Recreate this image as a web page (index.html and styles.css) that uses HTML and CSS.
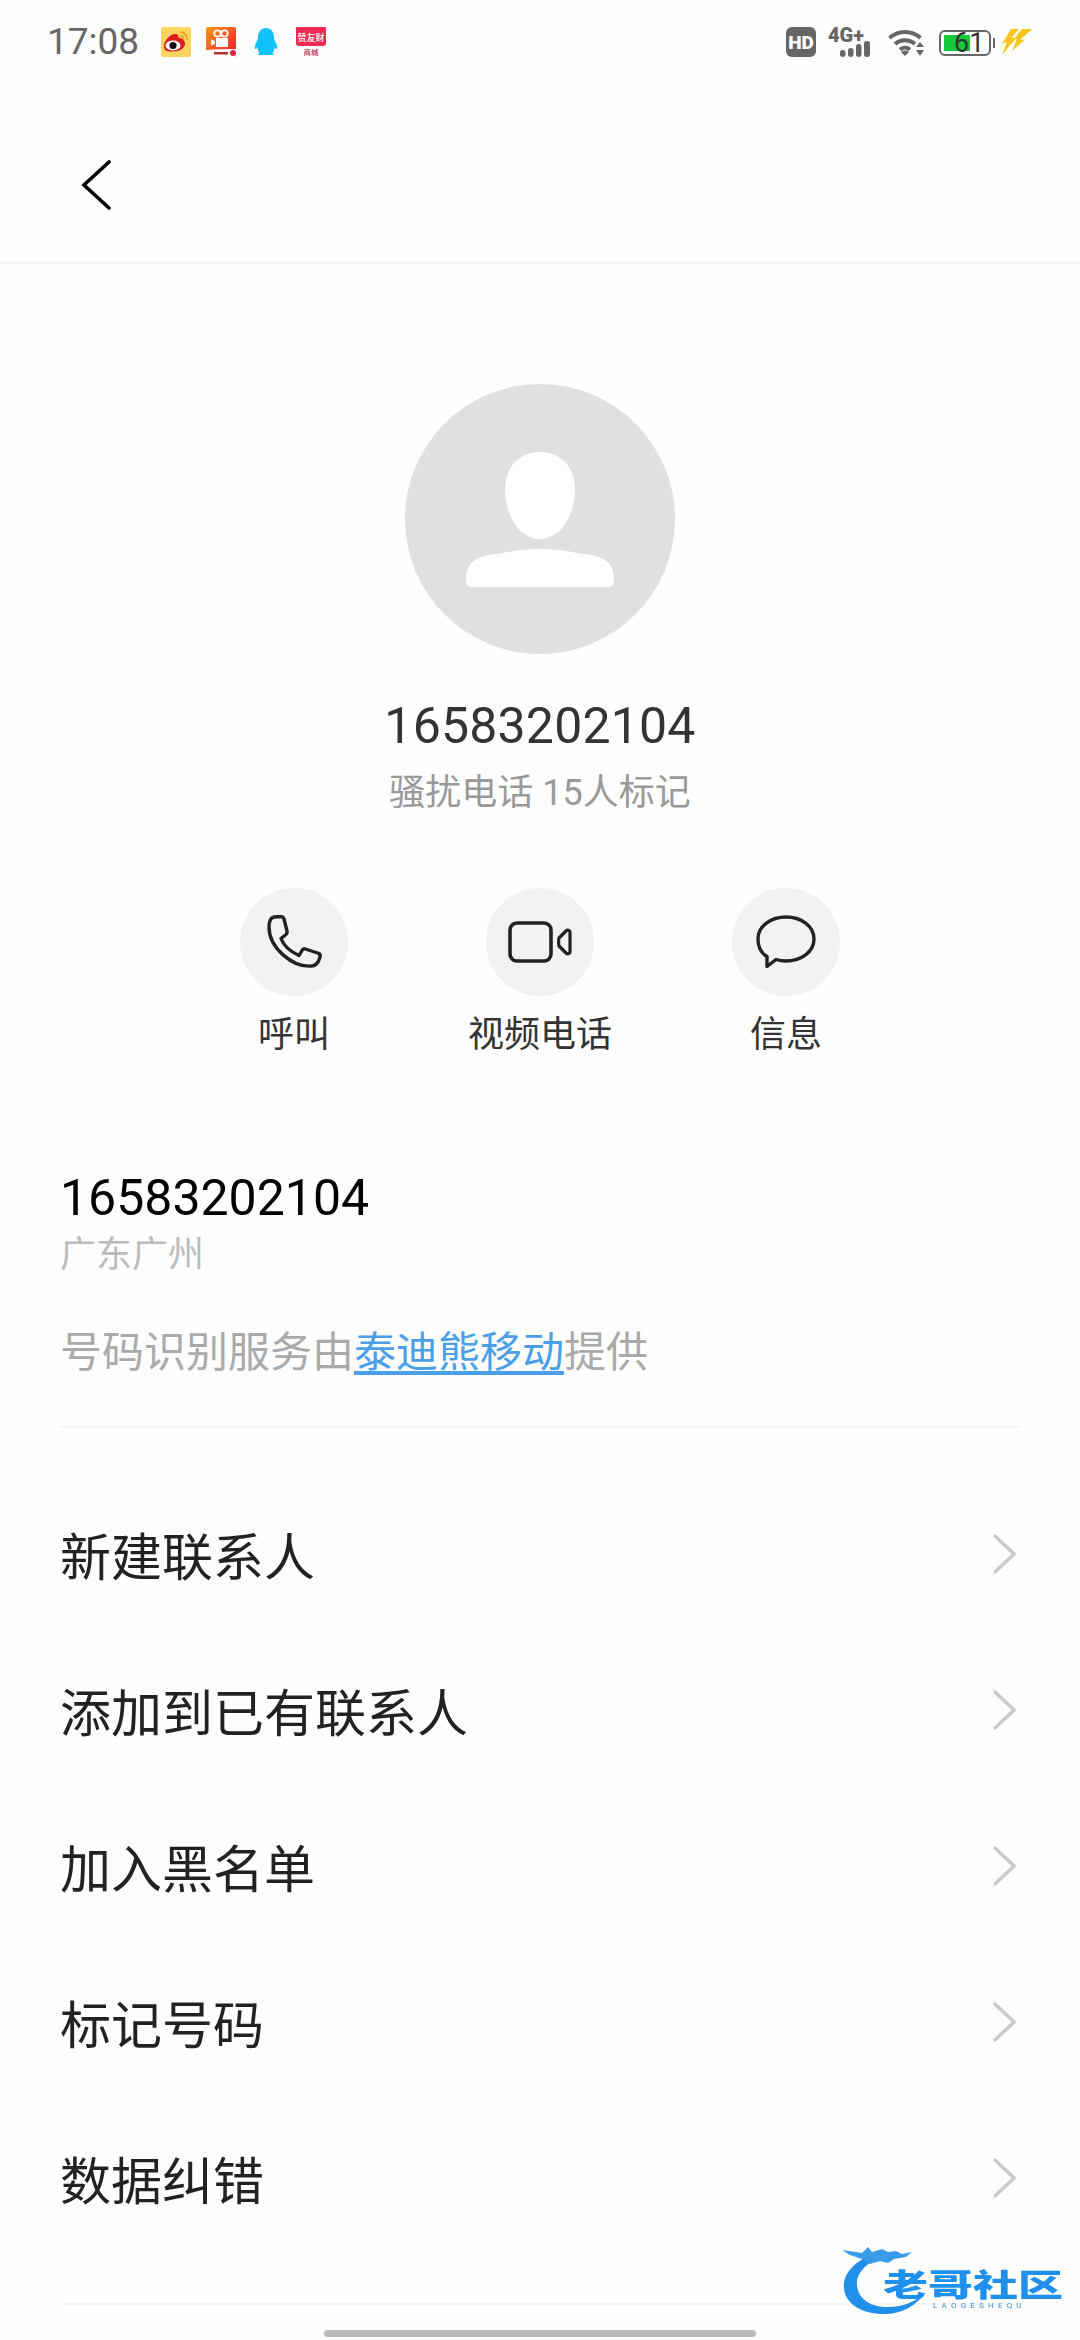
FILE: index.html
```html
<!DOCTYPE html>
<html lang="zh-CN">
<head>
    <meta charset="UTF-8">
    <meta name="viewport" content="width=device-width, initial-scale=1.0">
    <title>16583202104</title>
    <link rel="stylesheet" href="styles.css">
</head>
<body>
    <div class="phone">
        <div class="status">
            <div class="status-left">
                <span class="time">17:08</span>
                <svg class="app-icon" viewBox="0 0 30 30">
                    <rect width="30" height="30" rx="2" fill="#fdd45f"/>
                    <path d="M3 19c0-5 6-12 11-12 3 0 4 2 3.500 4 4 0 6.500 2 6.500 5.500 0 4.500-5 8-12 8S3 23.500 3 19z" fill="#e01d1d"/>
                    <ellipse cx="12" cy="18.500" rx="7.500" ry="5" fill="#fff"/>
                    <circle cx="12" cy="18.500" r="3.600" fill="#111"/>
                    <path d="M19 5c4.500 0 7 3 7 8M19 8.500c2.500 0 3.500 1.500 3.500 4" fill="none" stroke="#e3a11c" stroke-width="1.600"/>
                </svg>
                <svg class="app-icon" viewBox="0 0 30 30">
                    <defs>
                        <linearGradient id="kwai" x1="0" y1="0" x2="1" y2="1">
                            <stop offset="0" stop-color="#fb9a0d"/>
                            <stop offset="1" stop-color="#ee1238"/>
                        </linearGradient>
                    </defs>
                    <rect width="30" height="30" rx="2" fill="url(#kwai)"/>
                    <circle cx="11.500" cy="6.500" r="3.200" fill="none" stroke="#fff" stroke-width="1.800"/>
                    <circle cx="18.500" cy="6.500" r="3.200" fill="none" stroke="#fff" stroke-width="1.800"/>
                    <path d="M10 11h12v9H10zM9 14l-4-1.500v6L9 17z" fill="#fff"/>
                    <path d="M0 23c10-1 20-1 30-1v6a2 2 0 0 1-2 2H0z" fill="#fff"/>
                    <path d="M8 25h14v2.500H8z" fill="#b5352f"/>
                    <circle cx="27" cy="26" r="3" fill="#e8203f"/>
                </svg>
                <svg class="app-icon" viewBox="0 0 30 30">
                    <path d="M15 1c5 0 8 4 8 9 0 2 .5 3 2 6 1.500 3 1.500 6 .5 6-1 0-1.500-1-2-2 0 3-1 5-2 6 1 .5 1.500 1 1.500 1.500 0 .5-3 .500-5 .500h-6c-2 0-5 0-5-.500 0-.5.5-1 1.500-1.500-1-1-2-3-2-6-.5 1-1 2-2 2-1 0-1-3 .5-6 1.500-3 2-4 2-6 0-5 3-9 8-9z" fill="#12c2fb"/>
                </svg>
                <svg class="app-icon" viewBox="0 0 30 30">
                    <path d="M0 1a1 1 0 0 1 1-1h28a1 1 0 0 1 1 1v15c0 2-1 3-3 3H3c-2 0-3-1-3-3z" fill="#ee2b50"/>
                    <text class="app-text" x="15" y="13.500" text-anchor="middle" textLength="27" lengthAdjust="spacingAndGlyphs" font-size="9" fill="#fff">赞友财</text>
                    <text class="app-text" x="15" y="28" text-anchor="middle" textLength="15" lengthAdjust="spacingAndGlyphs" font-size="7" fill="#b5264a">商城</text>
                </svg>
            </div>
            <div class="status-right">
                <svg class="hd" viewBox="0 0 30 30">
                    <rect width="30" height="30" rx="6" fill="#666"/>
                    <text class="status-text" x="15" y="21.500" text-anchor="middle" font-size="19" fill="#fff">HD</text>
                </svg>
                <svg class="signal" viewBox="0 0 47 30">
                    <text class="status-text" x="0" y="15" font-size="20" fill="#666">4G+</text>
                    <g fill="#666">
                        <rect x="12" y="23" width="5.500" height="7" rx="2.700"/>
                        <rect x="20" y="21" width="5.500" height="9" rx="2.700"/>
                        <rect x="28" y="17" width="5.500" height="13" rx="2.700"/>
                        <rect x="36" y="14" width="6" height="16" rx="2.700"/>
                    </g>
                </svg>
                <svg class="wifi" viewBox="0 0 37 30">
                    <path d="M1.500 11c9-8 22-8 31 0M7 17c6-5 14-5 20 0M12 22.500c3-2.500 7-2.500 10 0" fill="none" stroke="#666" stroke-width="3.800"/>
                    <path d="M17 29l-4-4c2-2 6-2 8 0z" fill="#666"/>
                    <path d="M32 15l4 5h-8zM32 29l-4-6h8z" fill="#666"/>
                </svg>
                <div class="battery">
                    <div class="battery-body">
                        <div class="battery-fill" style="width: 61%"></div>
                        <span class="battery-num">61</span>
                    </div>
                    <div class="battery-tip"></div>
                </div>
                <svg class="bolt" viewBox="0 0 30 26">
                    <path d="M9 0h8L9 9l6-1L0 26 5 13l-5 2zM20 0h10L18 11l5-.5L10 22l5-12-4 1z" fill="#f8c51c"/>
                </svg>
            </div>
        </div>

        <div class="navbar">
            <svg class="back" viewBox="0 0 30 50">
                <path d="M28 2L3 25l25 23" fill="none" stroke="#000" stroke-width="3.600" stroke-linecap="round"/>
            </svg>
        </div>

        <div class="profile">
            <div class="avatar">
                <svg viewBox="0 0 270 270" width="270" height="270">
                    <path d="M135 68c-20 0-35 14-35 38 0 24 14 49 35 49s35-25 35-49c0-24-15-38-35-38z" fill="#fff"/>
                    <path d="M135 165c-20 0-30 3-45 5-22 3-29 10-29 26 0 5 2 7 5 7h138c3 0 5-2 5-7 0-16-7-23-29-26-15-2-25-5-45-5z" fill="#fff"/>
                </svg>
            </div>
            <div class="name">16583202104</div>
            <div class="tag">骚扰电话 15人标记</div>
        </div>

        <div class="actions">
            <div class="action">
                <div class="action-circle">
                    <svg viewBox="0 0 55 54" width="55" height="54">
                        <path d="M7 2l7-.5c1.500 0 2.500 1 3 2.500l3 12c.3 1.500 0 2.500-1 3.500l-5 4c3 8 9 13 18 17l3-5c1-1.500 2-2 3.500-1.500l12 4c2 .5 3 2 2.500 4-1 4-3 8.500-8 9C26 53 2 33 2 12 2 7 3 3 7 2z" fill="none" stroke="#222" stroke-width="3.400" stroke-linejoin="round"/>
                    </svg>
                </div>
                <span class="action-label">呼叫</span>
            </div>
            <div class="action">
                <div class="action-circle">
                    <svg viewBox="0 0 64 42" width="64" height="42">
                        <rect x="2" y="2" width="41" height="38" rx="7" fill="none" stroke="#222" stroke-width="3.600"/>
                        <path d="M51 17l7-7c1.500-1.500 4-1 4 1v20c0 2-2.500 2.500-4 1l-7-7c-.5-.5-.5-7.500 0-8z" fill="none" stroke="#222" stroke-width="3.200" stroke-linejoin="round"/>
                    </svg>
                </div>
                <span class="action-label">视频电话</span>
            </div>
            <div class="action">
                <div class="action-circle">
                    <svg viewBox="0 0 60 54" width="60" height="54">
                        <path d="M30 2c15 0 28 9 28 22S45 46 30 46c-4 0-7-.5-10-1.500l-9 7v-10C5 38 2 31 2 24 2 11 15 2 30 2z" fill="none" stroke="#222" stroke-width="3.400" stroke-linejoin="round"/>
                    </svg>
                </div>
                <span class="action-label">信息</span>
            </div>
        </div>

        <div class="info">
            <div class="info-number">16583202104</div>
            <div class="info-place">广东广州</div>
            <div class="info-service">号码识别服务由<a class="info-link" href="#">泰迪熊移动</a>提供</div>
        </div>

        <div class="menu">
            <div class="menu-row">
                <span>新建联系人</span>
                <svg class="chevron" viewBox="0 0 26 42"><path d="M3 3l19 18L3 39" fill="none" stroke="#cbcbcb" stroke-width="3.600" stroke-linecap="round"/></svg>
            </div>
            <div class="menu-row">
                <span>添加到已有联系人</span>
                <svg class="chevron" viewBox="0 0 26 42"><path d="M3 3l19 18L3 39" fill="none" stroke="#cbcbcb" stroke-width="3.600" stroke-linecap="round"/></svg>
            </div>
            <div class="menu-row">
                <span>加入黑名单</span>
                <svg class="chevron" viewBox="0 0 26 42"><path d="M3 3l19 18L3 39" fill="none" stroke="#cbcbcb" stroke-width="3.600" stroke-linecap="round"/></svg>
            </div>
            <div class="menu-row">
                <span>标记号码</span>
                <svg class="chevron" viewBox="0 0 26 42"><path d="M3 3l19 18L3 39" fill="none" stroke="#cbcbcb" stroke-width="3.600" stroke-linecap="round"/></svg>
            </div>
            <div class="menu-row">
                <span>数据纠错</span>
                <svg class="chevron" viewBox="0 0 26 42"><path d="M3 3l19 18L3 39" fill="none" stroke="#cbcbcb" stroke-width="3.600" stroke-linecap="round"/></svg>
            </div>
        </div>

        <div class="bottom-line"></div>
        <div class="home-bar"></div>

        <!-- watermark sits over the page -->
        <div class="watermark">
            <svg class="dragon" viewBox="0 0 90 74">
                <path d="M24 13C8 22 1 32 2 44c1 16 18 26 40 26 18 0 32-8 42-22-10 9-22 15-38 15-18 0-30-8-31-22-1-10 6-18 18-26z" fill="#2190ea"/>
                <path d="M0 6l20 3 6-6 4 5 10-3 6 3 8-1 6 3 10-2-6 5-12 2-6 4-8-2-10 3-8-5-12-4z" fill="#3a9bea"/>
            </svg>
            <div class="wm-title">老哥社区</div>
            <div class="wm-sub">LAOGESHEQU</div>
        </div>
    </div>
</body>
</html>
```

FILE: styles.css
```css
* { box-sizing: border-box; }
html, body { margin: 0; padding: 0; }
body { background-color: #fff; font-family: Roboto, "Noto Sans CJK SC", sans-serif; }
.phone { position: relative; width: 1080px; height: 2340px; overflow: hidden; background: #fefefe; }

.status { display: flex; justify-content: space-between; align-items: flex-start; height: 80px; padding: 27px 48px 0 47px; }
.status-left { display: flex; align-items: center; gap: 15px; }
.time { font-size: 37px; line-height: 30px; color: #666; margin-right: 7px; }
.app-icon { width: 30px; height: 30px; display: block; }
.app-text { font-family: "Noto Sans CJK SC", sans-serif; font-weight: 500; }
.status-text { font-family: Roboto, sans-serif; font-weight: 900; }
.status-right { display: flex; align-items: flex-start; }
.hd { width: 30px; height: 30px; margin-right: 12px; }
.signal { width: 47px; height: 30px; margin-right: 13px; overflow: visible; }
.wifi { width: 37px; height: 30px; margin-right: 14px; }
.battery { display: flex; align-items: center; margin-top: 3px; margin-right: 7px; }
.battery-body { position: relative; width: 52px; height: 26px; border: 2px solid #666; border-radius: 6px; padding: 3px; }
.battery-fill { height: 100%; background: #16c93c; }
.battery-num { position: absolute; left: 13px; top: -4px; font-size: 27px; line-height: 30px; color: #333; }
.battery-tip { width: 2px; height: 10px; background: #666; margin-left: 2px; }
.bolt { width: 30px; height: 26px; margin-top: 2px; }

.navbar { height: 184px; padding: 80px 0 0 81px; border-bottom: 2px solid #f5f5f5; }
.back { display: block; width: 30px; height: 50px; }

.profile { display: flex; flex-direction: column; align-items: center; padding-top: 120px; }
.avatar { width: 270px; height: 270px; border-radius: 50%; background: #e0e0e0; }
.avatar svg { display: block; }
.name { margin-top: 40px; font-size: 50px; line-height: 64px; color: #333; letter-spacing: .2px; }
.tag { margin-top: 10px; font-size: 36px; line-height: 50px; color: #999; }

.actions { display: flex; justify-content: center; gap: 138px; margin-top: 70px; }
.action { width: 108px; display: flex; flex-direction: column; align-items: center; }
.action-circle { width: 108px; height: 108px; border-radius: 50%; background: #f2f2f2; display: flex; align-items: center; justify-content: center; }
.action-label { margin-top: 14px; font-size: 36px; line-height: 50px; color: #333; white-space: nowrap; }

.info { margin: 108px 60px 0; padding-bottom: 45px; border-bottom: 2px solid #f5f5f5; }
.info-number { font-size: 50px; line-height: 60px; color: #000; }
.info-place { margin-top: 4px; font-size: 36px; line-height: 46px; color: #bbb; }
.info-service { margin-top: 47px; font-size: 42px; line-height: 56px; color: #aaa; }
.info-link { color: #4a9fe8; text-decoration: underline; text-underline-offset: 4px; }

.menu { margin-top: 48px; }
.menu-row { display: flex; align-items: center; justify-content: space-between; height: 156px; padding: 0 62px 0 60px; font-size: 51px; color: #222; }
.chevron { width: 26px; height: 42px; display: block; }

.bottom-line { margin: 47px 60px 0; height: 2px; background: #f5f5f5; }
.home-bar { position: absolute; left: 324px; bottom: 3px; width: 432px; height: 7px; border-radius: 4px; background: #bbb; }

.watermark { position: absolute; left: 842px; top: 2244px; width: 230px; height: 90px; filter: blur(.5px); }
.dragon { position: absolute; left: 0; top: 0; width: 90px; height: 74px; }
.wm-title { position: absolute; left: 41px; top: 24px; font-size: 45px; line-height: 36px; font-weight: 900; color: #1f8fec; white-space: nowrap; transform: scaleY(.68); }
.wm-sub { position: absolute; left: 91px; top: 57px; font-size: 8px; line-height: 10px; letter-spacing: 4.200px; color: #2f8fdc; white-space: nowrap; }
```
